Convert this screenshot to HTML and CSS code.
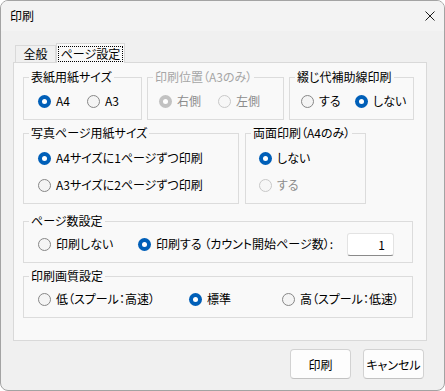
FILE: index.html
```html
<!DOCTYPE html>
<html lang="ja">
<head>
<meta charset="utf-8">
<title>印刷</title>
<link rel="stylesheet" href="styles.css">
</head>
<body>
<div class="window">
  <div class="titlebar">
    <span class="title">印刷</span>
    <svg class="close" width="10" height="10" viewBox="0 0 10 10"><path d="M0.5 0.5L9.5 9.5M9.5 0.5L0.5 9.5" stroke="#1b1b1b" stroke-width="1" fill="none"/></svg>
  </div>
  <div class="body">
    <div class="tabs">
      <div class="tab">全般</div>
      <div class="tab active"><span class="focus">ページ設定</span></div>
    </div>
    <div class="panel">
      <div class="row row1">
        <fieldset class="grp g1">
          <legend>表紙用紙サイズ</legend>
          <div class="opts">
            <label class="opt w49"><span class="radio on"></span>A4</label>
            <label class="opt"><span class="radio"></span>A3</label>
          </div>
        </fieldset>
        <fieldset class="grp g2 disabled">
          <legend>印刷位置（A3のみ）</legend>
          <div class="opts">
            <label class="opt w59"><span class="radio on"></span>右側</label>
            <label class="opt"><span class="radio"></span>左側</label>
          </div>
        </fieldset>
        <fieldset class="grp g3">
          <legend>綴じ代補助線印刷</legend>
          <div class="opts">
            <label class="opt w54"><span class="radio"></span>する</label>
            <label class="opt"><span class="radio on"></span>しない</label>
          </div>
        </fieldset>
      </div>
      <div class="row row2">
        <fieldset class="grp g4">
          <legend>写真ページ用紙サイズ</legend>
          <div class="opts col">
            <label class="opt"><span class="radio on"></span>A4サイズに1ページずつ印刷</label>
            <label class="opt"><span class="radio"></span>A3サイズに2ページずつ印刷</label>
          </div>
        </fieldset>
        <fieldset class="grp g5">
          <legend>両面印刷（A4のみ）</legend>
          <div class="opts col">
            <label class="opt"><span class="radio on"></span>しない</label>
            <label class="opt dis"><span class="radio"></span>する</label>
          </div>
        </fieldset>
      </div>
      <div class="row row3">
        <fieldset class="grp g6">
          <legend>ページ数設定</legend>
          <div class="opts">
            <label class="opt w100"><span class="radio"></span>印刷しない</label>
            <label class="opt w209"><span class="radio on"></span>印刷する （カウント開始ページ数）:</label>
            <div class="num">1</div>
          </div>
        </fieldset>
      </div>
      <div class="row row4">
        <fieldset class="grp g7">
          <legend>印刷画質設定</legend>
          <div class="opts">
            <label class="opt w151"><span class="radio"></span>低（スプール：高速）</label>
            <label class="opt w93"><span class="radio on"></span>標準</label>
            <label class="opt"><span class="radio"></span>高（スプール：低速）</label>
          </div>
        </fieldset>
      </div>
    </div>
    <div class="footer">
      <button class="btn">印刷</button>
      <button class="btn">キャンセル</button>
    </div>
  </div>
</div>
</body>
</html>
```

FILE: styles.css
```css
html, body {
  margin: 0;
  padding: 0;
  background: #ffffff;
}
body {
  font-family: "Noto Sans CJK JP", "Noto Sans", sans-serif;
  font-size: 12px;
  color: #000;
  font-feature-settings: "palt";
}
.window {
  width: 445px;
  height: 391px;
  box-sizing: border-box;
  border: 1px solid #a3a3a3;
  border-radius: 8px;
  background: #f0f0f0;
  overflow: hidden;
}
.titlebar {
  height: 30px;
  background: #f3f3f3;
  display: flex;
  align-items: center;
  justify-content: space-between;
  padding: 0 9px 0 9px;
}
.title {
  line-height: 30px;
  font-size: 12px;
}
.close {
  display: block;
}
.body {
  padding: 12px 0 0 12px;
}
.tabs {
  display: flex;
  align-items: flex-end;
  height: 19px;
  padding-left: 2px;
  position: relative;
  z-index: 1;
}
.tab {
  box-sizing: border-box;
  height: 17px;
  width: 41px;
  border: 1px solid #d9d9d9;
  border-bottom: none;
  background: #f0f0f0;
  text-align: center;
  line-height: 16px;
  white-space: nowrap;
}
.tab.active {
  height: 20px;
  width: 69px;
  margin-bottom: -1px;
  background: #f9f9f9;
  padding-top: 2px;
  line-height: 14px;
  display: flex;
  justify-content: center;
  align-items: flex-start;
}
.focus {
  display: block;
  border: 1px dotted #000;
  padding: 0 2px;
  line-height: 14px;
  white-space: nowrap;
}
.panel {
  width: 414px;
  height: 279px;
  box-sizing: border-box;
  border: 1px solid #d9d9d9;
  background: #f9f9f9;
  padding: 7px 0 0 9px;
  display: flex;
  flex-direction: column;
}
.row {
  display: flex;
}
.row1 { gap: 5px; }
.row2 { gap: 6px; margin-top: 6px; }
.row3 { margin-top: 10px; }
.row4 { margin-top: 6px; }
.grp {
  margin: 0;
  padding: 0;
  border: 1px solid #dcdcdc;
  box-sizing: border-box;
  min-width: 0;
}
.grp legend {
  margin-left: 5px;
  padding: 0 2px;
  line-height: 14px;
  font-size: 12px;
  white-space: nowrap;
}
.g1 { width: 119px; height: 50px; }
.g2 { width: 137px; height: 50px; }
.g3 { width: 125px; height: 50px; }
.g4 { width: 216px; height: 78px; }
.g5 { width: 121px; height: 78px; }
.g6 { width: 390px; height: 49px; }
.g7 { width: 390px; height: 49px; }
.opts {
  display: flex;
  align-items: center;
  height: 16px;
}
.opts.col {
  flex-direction: column;
  align-items: flex-start;
  height: auto;
  gap: 11px;
}
.g1 .opts { padding: 9px 0 0 14px; }
.g2 .opts { padding: 9px 0 0 11px; }
.g3 .opts { padding: 9px 0 0 11px; }
.g4 .opts { padding: 10px 0 0 14px; }
.g5 .opts { padding: 10px 0 0 13px; }
.g6 .opts { padding: 8px 0 0 14px; }
.g7 .opts { padding: 8px 0 0 14px; }
.opt {
  display: flex;
  align-items: center;
  height: 16px;
  line-height: 16px;
  white-space: nowrap;
  flex: none;
}
.w49 { width: 49px; }
.w59 { width: 59px; }
.w54 { width: 54px; }
.w100 { width: 100px; }
.w209 { width: 209px; }
.w151 { width: 151px; }
.w93 { width: 93px; }
.radio {
  width: 13px;
  height: 13px;
  box-sizing: border-box;
  border-radius: 50%;
  border: 1px solid #878787;
  background: #f4f4f4;
  margin-right: 5px;
  position: relative;
  flex: none;
}
.radio.on {
  border: none;
  background: #005fb8;
}
.radio.on::after {
  content: "";
  position: absolute;
  left: 4px;
  top: 4px;
  width: 5px;
  height: 5px;
  border-radius: 50%;
  background: #fff;
}
.disabled legend { color: #a6a6a6; }
.disabled .opt, .opt.dis { color: #8c8c8c; }
.disabled .radio, .opt.dis .radio {
  border-color: #c8c8c8;
  background: #f7f7f7;
}
.disabled .radio.on {
  background: #c2c2c2;
}
.num {
  width: 47px;
  height: 23px;
  box-sizing: border-box;
  background: #fff;
  border: 1px solid #e3e3e3;
  border-bottom: 1px solid #8a8a8a;
  border-radius: 3px;
  text-align: right;
  padding-right: 8px;
  line-height: 21px;
  flex: none;
}
.footer {
  display: flex;
  justify-content: flex-end;
  gap: 12px;
  margin-top: 8px;
  padding-right: 20px;
}
.btn {
  width: 61px;
  height: 30px;
  box-sizing: border-box;
  border: 1px solid #d2d2d2;
  border-bottom-color: #c2c2c2;
  border-radius: 4px;
  background: #fdfdfd;
  font-family: "Noto Sans CJK JP", "Noto Sans", sans-serif;
  font-size: 12px;
  color: #000;
  padding: 0;
  font-feature-settings: "palt";
}
```
